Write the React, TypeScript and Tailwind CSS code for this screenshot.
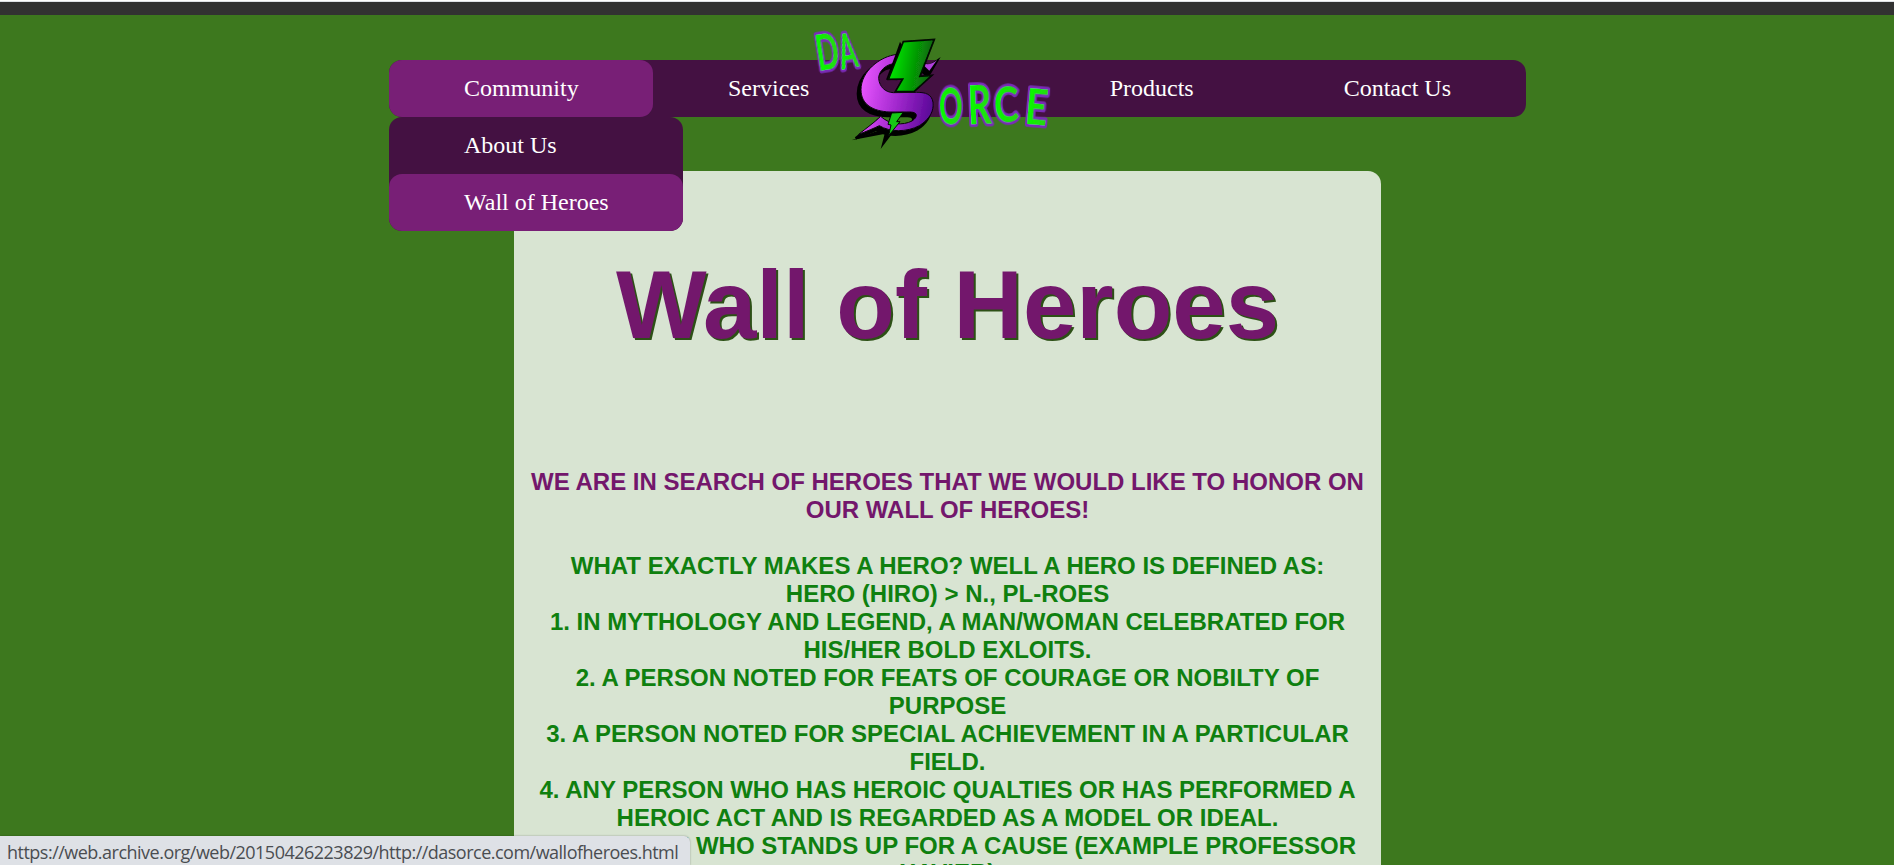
const navFont = "font-['Liberation_Serif',serif] text-[24px] leading-[27px] text-white";

function Logo() {
  const letters = [
    { ch: 'D', t: 'translate(86 168) rotate(-9) scale(0.6 1)', s: 150 },
    { ch: 'A', t: 'translate(156 164) rotate(-11) scale(0.54 1)', s: 142 },
    { ch: 'O', t: 'translate(448 329) rotate(-1) scale(0.57 1)', s: 154 },
    { ch: 'R', t: 'translate(535 328) rotate(-2) scale(0.7 1)', s: 158 },
    { ch: 'C', t: 'translate(614 323) rotate(-2) scale(0.75 1)', s: 148 },
    { ch: 'E', t: 'translate(702 326) rotate(5) scale(0.78 1)', s: 150 },
  ];
  const body =
    'M322 118 C268 124 213 170 213 224 C213 268 248 289 300 291 L362 291 C384 292 384 306 366 318 C338 332 300 330 272 304 C254 322 228 340 206 358 C232 348 252 340 268 332 C300 352 350 352 388 332 C420 312 432 288 429 262 C425 238 408 232 380 232 L310 233 C286 232 268 216 266 190 C266 168 288 148 312 146 Z';
  return (
    <svg viewBox="0 0 840 420" className="h-[140px] w-[280px]">
      <defs>
        <linearGradient id="violet" x1="210" x2="430" y1="220" y2="260" gradientUnits="userSpaceOnUse">
          <stop offset="0" stopColor="#e855ff" />
          <stop offset="0.5" stopColor="#a52ad0" />
          <stop offset="1" stopColor="#5a0898" />
        </linearGradient>
        <linearGradient id="bolt" x1="300" x2="425" y1="150" y2="170" gradientUnits="userSpaceOnUse">
          <stop offset="0" stopColor="#00ea00" />
          <stop offset="1" stopColor="#0a5f0a" />
        </linearGradient>
        <linearGradient id="lime" x1="0" x2="1" y1="0" y2="0">
          <stop offset="0" stopColor="#00ff00" />
          <stop offset="1" stopColor="#2ad50c" />
        </linearGradient>
        <filter id="soft" x="-5%" y="-5%" width="110%" height="110%">
          <feGaussianBlur stdDeviation="1.4" />
        </filter>
      </defs>
      <g filter="url(#soft)">
        <path d={body} transform="translate(-9 12)" fill="#050505" stroke="#050505" strokeWidth="8" />
        <path d="M184 376 L268 346 L284 356 L272 402 L310 352 Z" fill="#050505" />
        <path d="M388 142 L420 148 L452 126 L422 178 L410 186 L384 164 Z" fill="#050505" />
        <path d={body} fill="url(#violet)" stroke="#0a060c" strokeWidth="3" strokeLinejoin="round" />
        <path d="M394 144 Q422 154 441 135 L418 167 Z" fill="#b340e0" />
        <path d="M330 80 L316 120 L288 194 L322 196 L352 120 Z" fill="#050505" />
        <path
          d="M340 80 L433 73 L390 184 L426 181 L372 230 L316 230 L338 192 L295 193 Z"
          fill="url(#bolt)"
          stroke="#060806"
          strokeWidth="5"
        />
        <path d="M305 294 L340 292 L320 320 L330 320 L296 362 L303 330 L294 328 Z" fill="#12c812" stroke="#060806" strokeWidth="3" />
      </g>
      {letters.map((l) => (
        <text
          key={l.ch}
          transform={l.t}
          fontSize={l.s}
          className="font-['Lato',sans-serif] font-bold"
          fill="url(#lime)"
          stroke="#7a2bb8"
          strokeWidth="17"
          strokeLinejoin="round"
          paintOrder="stroke"
          filter="url(#soft)"
        >
          {l.ch}
        </text>
      ))}
    </svg>
  );
}

export default function App() {
  return (
    <div className="relative flex h-[865px] w-full flex-col overflow-hidden bg-[#3d781e]">
      <div className="h-[2px] shrink-0 border-t border-white bg-[#dee1e6]" />
      <div className="h-[13px] shrink-0 bg-[#323232]" />

      <nav className={`relative ml-[389px] mt-[45px] flex h-[57px] w-[1137px] shrink-0 whitespace-nowrap rounded-[13px] bg-[#441142] ${navFont}`}>
        <a className="w-[264px] rounded-[13px] bg-[#781f76] px-[75px] py-[15px]">Community</a>
        <a className="w-[382px] px-[75px] py-[15px]">Services</a>
        <a className="w-[234px] px-[75px] py-[15px]">Products</a>
        <a className="px-[75px] py-[15px]">Contact Us</a>
        <div className="absolute left-0 top-[57px] z-10 flex w-[294px] flex-col rounded-[13px] bg-[#441142]">
          <a className="px-[75px] py-[15px]">About Us</a>
          <a className="rounded-[13px] bg-[#781f76] px-[75px] py-[15px]">Wall of Heroes</a>
        </div>
        <div className="absolute left-[401px] top-[-45px]">
          <Logo />
        </div>
      </nav>

      <main className="ml-[514px] mt-[54px] h-[800px] w-[867px] shrink-0 rounded-[13px] bg-[#d8e4d2] text-center font-['Liberation_Sans',sans-serif] font-bold">
        <h1 className="pt-[79px] text-[96px] leading-[110px] text-[#73176c] [text-shadow:2px_2px_0_#2d5016]">Wall of Heroes</h1>
        <div className="mt-[108px] text-[24px] leading-[28px] text-[#0f800f]">
          <p className="text-[#73176c]">
            WE ARE IN SEARCH OF HEROES THAT WE WOULD LIKE TO HONOR ON
            <br />
            OUR WALL OF HEROES!
          </p>
          <p className="mt-[28px]">
            WHAT EXACTLY MAKES A HERO? WELL A HERO IS DEFINED AS:
            <br />
            HERO (HIRO) &gt; N., PL-ROES
            <br />
            1. IN MYTHOLOGY AND LEGEND, A MAN/WOMAN CELEBRATED FOR
            <br />
            HIS/HER BOLD EXLOITS.
            <br />
            2. A PERSON NOTED FOR FEATS OF COURAGE OR NOBILTY OF
            <br />
            PURPOSE
            <br />
            3. A PERSON NOTED FOR SPECIAL ACHIEVEMENT IN A PARTICULAR
            <br />
            FIELD.
            <br />
            4. ANY PERSON WHO HAS HEROIC QUALTIES OR HAS PERFORMED A
            <br />
            HEROIC ACT AND IS REGARDED AS A MODEL OR IDEAL.
            <br />
            5. A PERSON WHO STANDS UP FOR A CAUSE (EXAMPLE PROFESSOR
          </p>
          <p className="-mt-px">XAVIER)</p>
        </div>
      </main>

      <div className="absolute bottom-0 left-0 h-[29px] w-[690px] whitespace-nowrap rounded-tr-[6px] bg-[#dee1e6] pl-[7px] font-['Open_Sans',sans-serif] text-[18px] leading-[32px] tracking-[-0.51px] text-[#4a4d51] shadow-[0_0_2px_rgba(0,0,0,0.35)]">
        https://web.archive.org/web/20150426223829/http://dasorce.com/wallofheroes.html
      </div>
    </div>
  );
}
